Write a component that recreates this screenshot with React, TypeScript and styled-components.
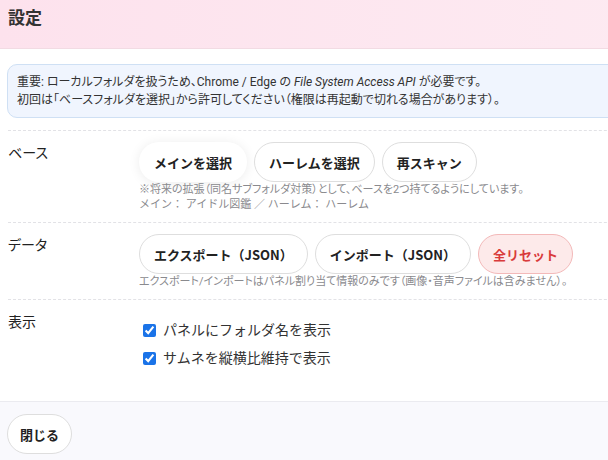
import React from "react";
import styled, { createGlobalStyle } from "styled-components";

const Global = createGlobalStyle`
  html, body { margin: 0; padding: 0; overflow: hidden; background: #fff; }
  body { font-family: Roboto, "Noto Sans CJK JP", sans-serif; color: #222; }
  * { box-sizing: border-box; }
`;

const Dialog = styled.div`
  width: 720px;
  height: 460px;
  display: flex;
  flex-direction: column;
  background: #fff;
`;

const Header = styled.header`
  height: 49px;
  flex: none;
  display: flex;
  align-items: flex-start;
  padding: 7px 8px 0;
  background: linear-gradient(90deg, #fde2ed 0%, #fdebf2 100%);
  border-bottom: 1px solid #f2dbe3;
`;

const Title = styled.h1`
  margin: 0;
  font-size: 17px;
  line-height: 22px;
  font-weight: 700;
  color: #333;
`;

const Body = styled.div`
  flex: 1;
  padding: 15px 8px 0 7px;
  display: flex;
  flex-direction: column;
`;

const Note = styled.div`
  border: 1px solid #cfe0f4;
  background: #f0f5fe;
  border-radius: 10px;
  padding: 8px 9px;
  font-size: 12px;
  line-height: 18px;
  color: #333;
  margin-bottom: 12px;
  font-feature-settings: "palt";
`;

const Section = styled.section<{ $pb: number }>`
  display: grid;
  grid-template-columns: 131px 1fr;
  border-top: 1px dashed #e2e2e6;
  margin-left: 1px;
  padding: 11px 0 ${(p) => p.$pb}px;
`;

const Label = styled.div`
  font-size: 14px;
  line-height: 20px;
  padding-top: 1px;
  color: #222;
  font-feature-settings: "palt";
`;

const Content = styled.div`
  display: flex;
  flex-direction: column;
`;

const ButtonRow = styled.div`
  display: flex;
  gap: 7px;
`;

const Button = styled.button<{ $variant?: "ghost" | "danger" | "normal"; $pad?: number }>`
  height: 40px;
  padding: 0 ${(p) => p.$pad ?? 14}px;
  border-radius: 20px;
  font-family: "Noto Sans CJK JP", sans-serif;
  font-size: 13px;
  font-weight: 700;
  color: #222;
  background: #fff;
  border: 1px solid #dedede;
  cursor: pointer;
  ${(p) =>
    p.$variant === "ghost" &&
    `border-color: transparent; box-shadow: 0 1px 12px rgba(0,0,0,0.08);`}
  ${(p) =>
    p.$variant === "danger" &&
    `color: #d93b3b; background: #fdeaea; border-color: #f3b9b9;`}
`;

const Hint = styled.div`
  font-size: 11px;
  line-height: 15px;
  color: #8a8a8e;
  font-feature-settings: "palt";
`;

const HintLine = styled.div<{ $full?: boolean }>`
  font-feature-settings: ${(p) => (p.$full ? "normal" : "\"palt\"")};
`;

const Checks = styled.div`
  display: flex;
  flex-direction: column;
  gap: 8px;
  padding-top: 9px;
`;

const CheckRow = styled.label`
  display: flex;
  align-items: center;
  gap: 7px;
  font-size: 14px;
  line-height: 20px;
  color: #333;
  padding-left: 4px;
`;

const Box = styled.input`
  margin: 0;
  width: 13px;
  height: 13px;
  accent-color: #1a73e8;
`;

const Footer = styled.footer`
  height: 59px;
  flex: none;
  border-top: 1px solid #ebebf0;
  background: #f9f9fd;
  padding: 12px 7px;
`;

export default function App() {
  return (
    <>
      <Global />
      <Dialog>
        <Header>
          <Title>設定</Title>
        </Header>
        <Body>
          <Note>
            重要: ローカルフォルダを扱うため、Chrome / Edge の <i>File System Access API</i> が必要です。
            <br />
            初回は「ベースフォルダを選択」から許可してください（権限は再起動で切れる場合があります）。
          </Note>
          <Section $pb={10}>
            <Label>ベース</Label>
            <Content>
              <ButtonRow>
                <Button $variant="ghost">メインを選択</Button>
                <Button>ハーレムを選択</Button>
                <Button>再スキャン</Button>
              </ButtonRow>
              <Hint>
                <HintLine>※将来の拡張（同名サブフォルダ対策）として、ベースを2つ持てるようにしています。</HintLine>
                <HintLine $full>メイン： アイドル図鑑 ／ ハーレム： ハーレム</HintLine>
              </Hint>
            </Content>
          </Section>
          <Section $pb={10}>
            <Label>データ</Label>
            <Content>
              <ButtonRow>
                <Button>エクスポート（JSON）</Button>
                <Button>インポート（JSON）</Button>
                <Button $variant="danger">全リセット</Button>
              </ButtonRow>
              <Hint>エクスポート/インポートはパネル割り当て情報のみです（画像・音声ファイルは含みません）。</Hint>
            </Content>
          </Section>
          <Section $pb={0}>
            <Label>表示</Label>
            <Checks>
              <CheckRow>
                <Box type="checkbox" defaultChecked />
                パネルにフォルダ名を表示
              </CheckRow>
              <CheckRow>
                <Box type="checkbox" defaultChecked />
                サムネを縦横比維持で表示
              </CheckRow>
            </Checks>
          </Section>
        </Body>
        <Footer>
          <Button $pad={12}>閉じる</Button>
        </Footer>
      </Dialog>
    </>
  );
}
